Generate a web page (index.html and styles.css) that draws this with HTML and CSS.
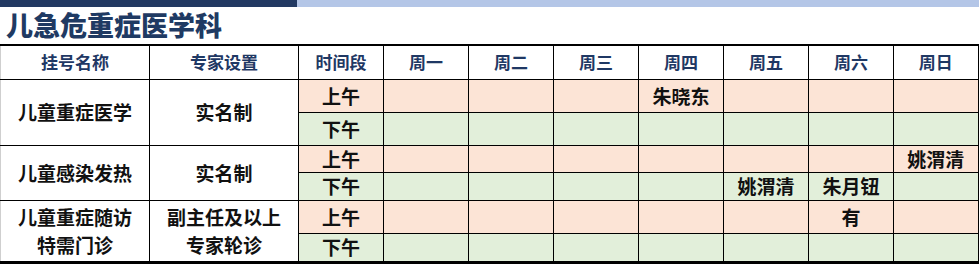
FILE: index.html
```html
<!DOCTYPE html>
<html lang="zh">
<head>
<meta charset="utf-8">
<title>儿急危重症医学科</title>
<link rel="stylesheet" href="styles.css">
</head>
<body>
<div class="page">
  <div class="topbar"><div class="topbar-dark"></div><div class="topbar-light"></div></div>
  <h1 class="title">儿急危重症医学科</h1>
  <table class="sched">
    <colgroup>
      <col class="c-name"><col class="c-exp"><col class="c-time">
      <col class="c-day"><col class="c-day"><col class="c-day"><col class="c-day"><col class="c-day"><col class="c-day"><col class="c-day">
    </colgroup>
    <thead>
      <tr class="r-head">
        <th>挂号名称</th><th>专家设置</th><th>时间段</th>
        <th>周一</th><th>周二</th><th>周三</th><th>周四</th><th>周五</th><th>周六</th><th>周日</th>
      </tr>
    </thead>
    <tbody>
      <tr class="r1a am">
        <td class="lbl" rowspan="2">儿童重症医学</td><td class="lbl" rowspan="2">实名制</td>
        <td>上午</td><td></td><td></td><td></td><td>朱晓东</td><td></td><td></td><td></td>
      </tr>
      <tr class="r1b pm">
        <td>下午</td><td></td><td></td><td></td><td></td><td></td><td></td><td></td>
      </tr>
      <tr class="r2a am grp">
        <td class="lbl" rowspan="2">儿童感染发热</td><td class="lbl" rowspan="2">实名制</td>
        <td>上午</td><td></td><td></td><td></td><td></td><td></td><td></td><td>姚渭清</td>
      </tr>
      <tr class="r2b pm">
        <td>下午</td><td></td><td></td><td></td><td></td><td>姚渭清</td><td>朱月钮</td><td></td>
      </tr>
      <tr class="r3a am grp">
        <td class="lbl two" rowspan="2">儿童重症随访<br>特需门诊</td><td class="lbl two" rowspan="2">副主任及以上<br>专家轮诊</td>
        <td>上午</td><td></td><td></td><td></td><td></td><td></td><td>有</td><td></td>
      </tr>
      <tr class="r3b pm last">
        <td>下午</td><td></td><td></td><td></td><td></td><td></td><td></td><td></td>
      </tr>
    </tbody>
  </table>
</div>
</body>
</html>
```

FILE: styles.css
```css
* { box-sizing: border-box; }
html, body { margin: 0; padding: 0; background: #fff; }
body {
  font-family: "Noto Sans CJK SC", "Noto Sans", sans-serif;
  width: 979px;
  height: 266px;
  overflow: hidden;
}
.page { width: 979px; }
.topbar { display: flex; height: 7px; }
.topbar-dark { width: 297px; background: #223962; }
.topbar-light { flex: 1; background: #b4c6e7; }
.title {
  margin: 0;
  padding-left: 6px;
  height: 37px;
  line-height: 36px;
  font-size: 27px;
  font-weight: 900;
  color: #1f3a63;
  letter-spacing: 0;
}
.sched {
  width: 979px;
  border-collapse: collapse;
  table-layout: fixed;
  border-top: 2px solid #000;
  border-bottom: 3px solid #000;
  border-right: 2px solid #000;
  border-left: 1px solid #cfcfcf;
}
.c-name { width: 149px; }
.c-exp { width: 149px; }
.c-time { width: 85px; }
.c-day { width: 85px; }
.sched th, .sched td {
  border: 1px solid #000;
  padding: 0;
  text-align: center;
  vertical-align: middle;
  font-weight: 700;
  white-space: nowrap;
}
.sched th {
  font-size: 17px;
  color: #1f3864;
  background: #fff;
  line-height: 20px;
}
.sched td {
  font-size: 19px;
  color: #111;
  line-height: 22px;
}
.sched th:first-child, .sched td.lbl { border-left: 1px solid #cfcfcf; }
.sched td.lbl { background: #fff; }
.sched td.two { line-height: 28px; }
.r-head { height: 34px; }
.r1a { height: 33px; }
.r1b { height: 33px; }
.r2a { height: 27px; }
.r2b { height: 28px; }
.r3a { height: 33px; }
.r3b { height: 29px; }
.am td { background: #fce4d6; }
.pm td { background: #e2efda; }
.am td.lbl { background: #fff; }
```
